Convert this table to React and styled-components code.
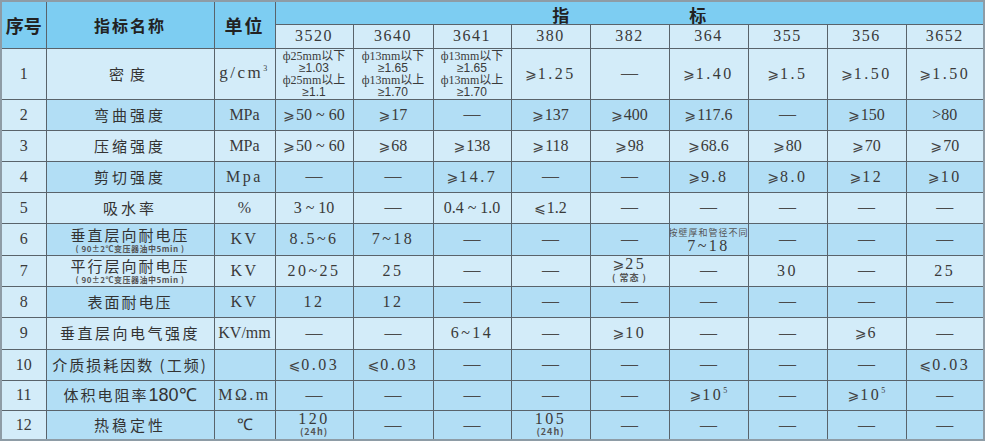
import React from "react";
import styled, { createGlobalStyle } from "styled-components";

const Global = createGlobalStyle`
  html, body { margin: 0; padding: 0; background: #ffffff; }
  body { font-family: "Liberation Serif", "Noto Sans CJK SC", serif; }
`;

const LIGHT = "#d3ecf9";
const DARK = "#b2def5";
const HEAD = "#7dcdf2";

const Table = styled.table`
  border-collapse: collapse;
  table-layout: fixed;
  width: 983px;
  border: 2px solid #8e9ca6;
  color: #333;
`;

const HeadCell = styled.th`
  background: ${HEAD};
  border: 1px solid #59636b;
  padding: 0;
  font-family: "Noto Sans CJK SC", sans-serif;
  font-weight: 700;
  font-size: ${(p) => p.$size || 17}px;
  letter-spacing: ${(p) => p.$ls || 0}px;
  color: #222;
  text-align: center;
  vertical-align: middle;
  line-height: 1;
`;

const SpanHead = styled.div`
  display: flex;
  justify-content: center;
  align-items: flex-end;
  gap: 120px;
  padding-top: 3px;
  font-family: "Noto Sans CJK SC", sans-serif;
  font-weight: 700;
  font-size: 17px;
  color: #222;
`;

const GradeCell = styled.th`
  background: ${LIGHT};
  border: 1px solid #59636b;
  padding: 0;
  font-family: "Liberation Serif", serif;
  font-weight: 400;
  font-size: 16px;
  letter-spacing: 1.5px;
  color: #3a3a3a;
  text-align: center;
  vertical-align: middle;
`;

const Cell = styled.td`
  background: ${(p) => (p.$tone === "dark" ? DARK : LIGHT)};
  border: 1px solid #59636b;
  padding: 0;
  text-align: center;
  vertical-align: middle;
  font-family: "Liberation Serif", "Noto Sans CJK SC", serif;
  font-size: 16px;
  line-height: 1.2;
  color: #3a3a3a;
  white-space: nowrap;
  overflow: hidden;
`;

const Row = styled.tr`
  height: ${(p) => p.$h}px;
`;

const Name = styled.div`
  font-family: "Noto Sans CJK SC", sans-serif;
  font-size: 15px;
  letter-spacing: ${(p) => (p.$ls != null ? p.$ls : 3)}px;
  color: #333;
  line-height: 18px;
`;

const Note = styled.div`
  font-family: "Noto Sans CJK SC", sans-serif;
  font-size: 8px;
  font-weight: 700;
  color: #555;
  line-height: 9px;
  letter-spacing: 0.5px;
`;

const Big = styled.span`
  font-family: "Liberation Sans", sans-serif;
  font-size: 18px;
  letter-spacing: 0;
`;

const Val = styled.span`
  font-family: "Liberation Serif", serif;
  font-size: ${(p) => p.$size || 16}px;
  letter-spacing: ${(p) => (p.$wide ? 2.5 : 0)}px;
  color: #3a3a3a;
`;

const Ge = styled.span`
  font-family: "DejaVu Sans", sans-serif;
  font-size: 14px;
  letter-spacing: 1px;
  color: #444;
`;

const DashText = styled.span`
  font-family: "Liberation Serif", serif;
  font-size: 17px;
  color: #4a4a4a;
`;

const Stack = styled.div`
  display: flex;
  flex-direction: column;
  align-items: center;
  justify-content: center;
  line-height: ${(p) => (p.$lh ? `${p.$lh}px` : "normal")};
`;

const Small = styled.span`
  font-family: ${(p) => (p.$sans ? '"Liberation Sans", sans-serif' : '"Liberation Serif", "Noto Sans CJK SC", serif')};
  font-size: ${(p) => p.$size || 12}px;
  color: #3a3a3a;
  letter-spacing: ${(p) => p.$ls || 0}px;
`;

const Tiny = styled.span`
  font-family: "Noto Sans CJK SC", sans-serif;
  font-size: ${(p) => p.$size || 9}px;
  font-weight: ${(p) => p.$w || 700};
  color: #555;
  letter-spacing: 1px;
`;

const Sup = styled.sup`
  font-size: 8px;
  vertical-align: 7px;
  line-height: 0;
`;

const D = () => <DashText>—</DashText>;
const G = ({ v, wide, le }) => (
  <>
    <Ge>{le ? "⩽" : "⩾"}</Ge>
    <Val $wide={wide}>{v}</Val>
  </>
);

const Phi = ({ d, side }) => (
  <Small $size={12}>ф{d}mm以{side}</Small>
);

const density = (d, a, b) => (
  <Stack $lh={12}>
    <Phi d={d} side="下" />
    <Small $sans $size={12}>≥{a}</Small>
    <Phi d={d} side="上" />
    <Small $sans $size={12}>≥{b}</Small>
  </Stack>
);

const grades = ["3520", "3640", "3641", "380", "382", "364", "355", "356", "3652"];
const widths = [45, 168, 61, 78, 80, 78, 79, 79, 79, 79, 79, 78];

const rows = [
  {
    n: 1, h: 51, tone: "light",
    name: <Name $ls={6}>密度</Name>,
    unit: <Val $size={17} $wide>g/cm<Sup>3</Sup></Val>,
    vals: [
      density(25, "1.03", "1.1"),
      density(13, "1.65", "1.70"),
      density(13, "1.65", "1.70"),
      <G v="1.25" wide />, <D />, <G v="1.40" wide />, <G v="1.5" wide />, <G v="1.50" wide />, <G v="1.50" wide />,
    ],
  },
  {
    n: 2, h: 31, tone: "dark",
    name: <Name>弯曲强度</Name>,
    unit: <Val>MPa</Val>,
    vals: [<G v="50 ~ 60" />, <G v="17" />, <D />, <G v="137" />, <G v="400" />, <G v="117.6" />, <D />, <G v="150" />, <Val>&gt;80</Val>],
  },
  {
    n: 3, h: 31, tone: "light",
    name: <Name>压缩强度</Name>,
    unit: <Val>MPa</Val>,
    vals: [<G v="50 ~ 60" />, <G v="68" />, <G v="138" />, <G v="118" />, <G v="98" />, <G v="68.6" />, <G v="80" />, <G v="70" />, <G v="70" />],
  },
  {
    n: 4, h: 31, tone: "dark",
    name: <Name>剪切强度</Name>,
    unit: <Val $wide>Mpa</Val>,
    vals: [<D />, <D />, <G v="14.7" wide />, <D />, <D />, <G v="9.8" wide />, <G v="8.0" wide />, <G v="12" wide />, <G v="10" wide />],
  },
  {
    n: 5, h: 31, tone: "light",
    name: <Name>吸水率</Name>,
    unit: <Val>%</Val>,
    vals: [<Val>3 ~ 10</Val>, <D />, <Val>0.4 ~ 1.0</Val>, <G v="1.2" le />, <D />, <D />, <D />, <D />, <D />],
  },
  {
    n: 6, h: 32, tone: "dark",
    name: (
      <Stack>
        <Name $ls={2}>垂直层向耐电压</Name>
        <Note>( 90±2℃变压器油中5min )</Note>
      </Stack>
    ),
    unit: <Val $wide>KV</Val>,
    vals: [
      <Val $wide>8.5~6</Val>, <Val $wide>7~18</Val>, <D />, <D />, <D />,
      <Stack $lh={13}>
        <Tiny $size={9} $w={400}>按壁厚和管径不同</Tiny>
        <Val $wide>7~18</Val>
      </Stack>,
      <D />, <D />, <D />,
    ],
  },
  {
    n: 7, h: 31, tone: "light",
    name: (
      <Stack>
        <Name $ls={2}>平行层向耐电压</Name>
        <Note>( 90±2℃变压器油中5min )</Note>
      </Stack>
    ),
    unit: <Val $wide>KV</Val>,
    vals: [
      <Val $wide>20~25</Val>, <Val $wide>25</Val>, <D />, <D />,
      <Stack $lh={14}>
        <span><G v="25" wide /></span>
        <Tiny>( 常态 )</Tiny>
      </Stack>,
      <D />, <Val $wide>30</Val>, <D />, <Val $wide>25</Val>,
    ],
  },
  {
    n: 8, h: 31, tone: "dark",
    name: <Name $ls={2}>表面耐电压</Name>,
    unit: <Val $wide>KV</Val>,
    vals: [<Val $wide>12</Val>, <Val $wide>12</Val>, <D />, <D />, <D />, <D />, <D />, <D />, <D />],
  },
  {
    n: 9, h: 32, tone: "light",
    name: <Name $ls={2.5}>垂直层向电气强度</Name>,
    unit: <Val>KV/mm</Val>,
    vals: [<D />, <D />, <Val $wide>6~14</Val>, <D />, <G v="10" wide />, <D />, <D />, <G v="6" wide />, <D />],
  },
  {
    n: 10, h: 31, tone: "dark",
    name: <Name $ls={2}>介质损耗因数 (工频)</Name>,
    unit: null,
    vals: [<G v="0.03" wide le />, <G v="0.03" wide le />, <D />, <D />, <D />, <D />, <D />, <D />, <G v="0.03" wide le />],
  },
  {
    n: 11, h: 30, tone: "dark",
    name: <Name $ls={2}>体积电阻率<Big>180℃</Big></Name>,
    unit: <Val $wide>MΩ.m</Val>,
    vals: [<D />, <D />, <D />, <D />, <D />, <><G v="10" wide /><Sup>5</Sup></>, <D />, <><G v="10" wide /><Sup>5</Sup></>, <D />],
  },
  {
    n: 12, h: 30, tone: "dark",
    name: <Name $ls={3}>热稳定性</Name>,
    unit: <Val>℃</Val>,
    vals: [
      <Stack $lh={13}><Val $wide>120</Val><Tiny $size={9}>(24h)</Tiny></Stack>,
      <D />, <D />,
      <Stack $lh={13}><Val $wide>105</Val><Tiny $size={9}>(24h)</Tiny></Stack>,
      <D />, <D />, <D />, <D />, <D />,
    ],
  },
];

const SeqText = styled.span`
  font-family: "Liberation Serif", serif;
  font-size: 16px;
  color: #3a3a3a;
`;

export default function App() {
  return (
    <>
      <Global />
      <Table>
        <colgroup>
          {widths.map((w, i) => (
            <col key={i} style={{ width: w }} />
          ))}
        </colgroup>
        <thead>
          <Row $h={23}>
            <HeadCell rowSpan={2} $size={18}>序号</HeadCell>
            <HeadCell rowSpan={2} $size={16} $ls={2}>指标名称</HeadCell>
            <HeadCell rowSpan={2} $size={18} $ls={2}>单位</HeadCell>
            <HeadCell colSpan={9}>
              <SpanHead>
                <span>指</span>
                <span>标</span>
              </SpanHead>
            </HeadCell>
          </Row>
          <Row $h={24}>
            {grades.map((g) => (
              <GradeCell key={g}>{g}</GradeCell>
            ))}
          </Row>
        </thead>
        <tbody>
          {rows.map((r) => (
            <Row key={r.n} $h={r.h}>
              <Cell $tone="light"><SeqText>{r.n}</SeqText></Cell>
              <Cell $tone={r.tone}>{r.name}</Cell>
              <Cell $tone={r.tone}>{r.unit}</Cell>
              {r.vals.map((v, i) => (
                <Cell key={i} $tone={r.tone}>{v}</Cell>
              ))}
            </Row>
          ))}
        </tbody>
      </Table>
    </>
  );
}
